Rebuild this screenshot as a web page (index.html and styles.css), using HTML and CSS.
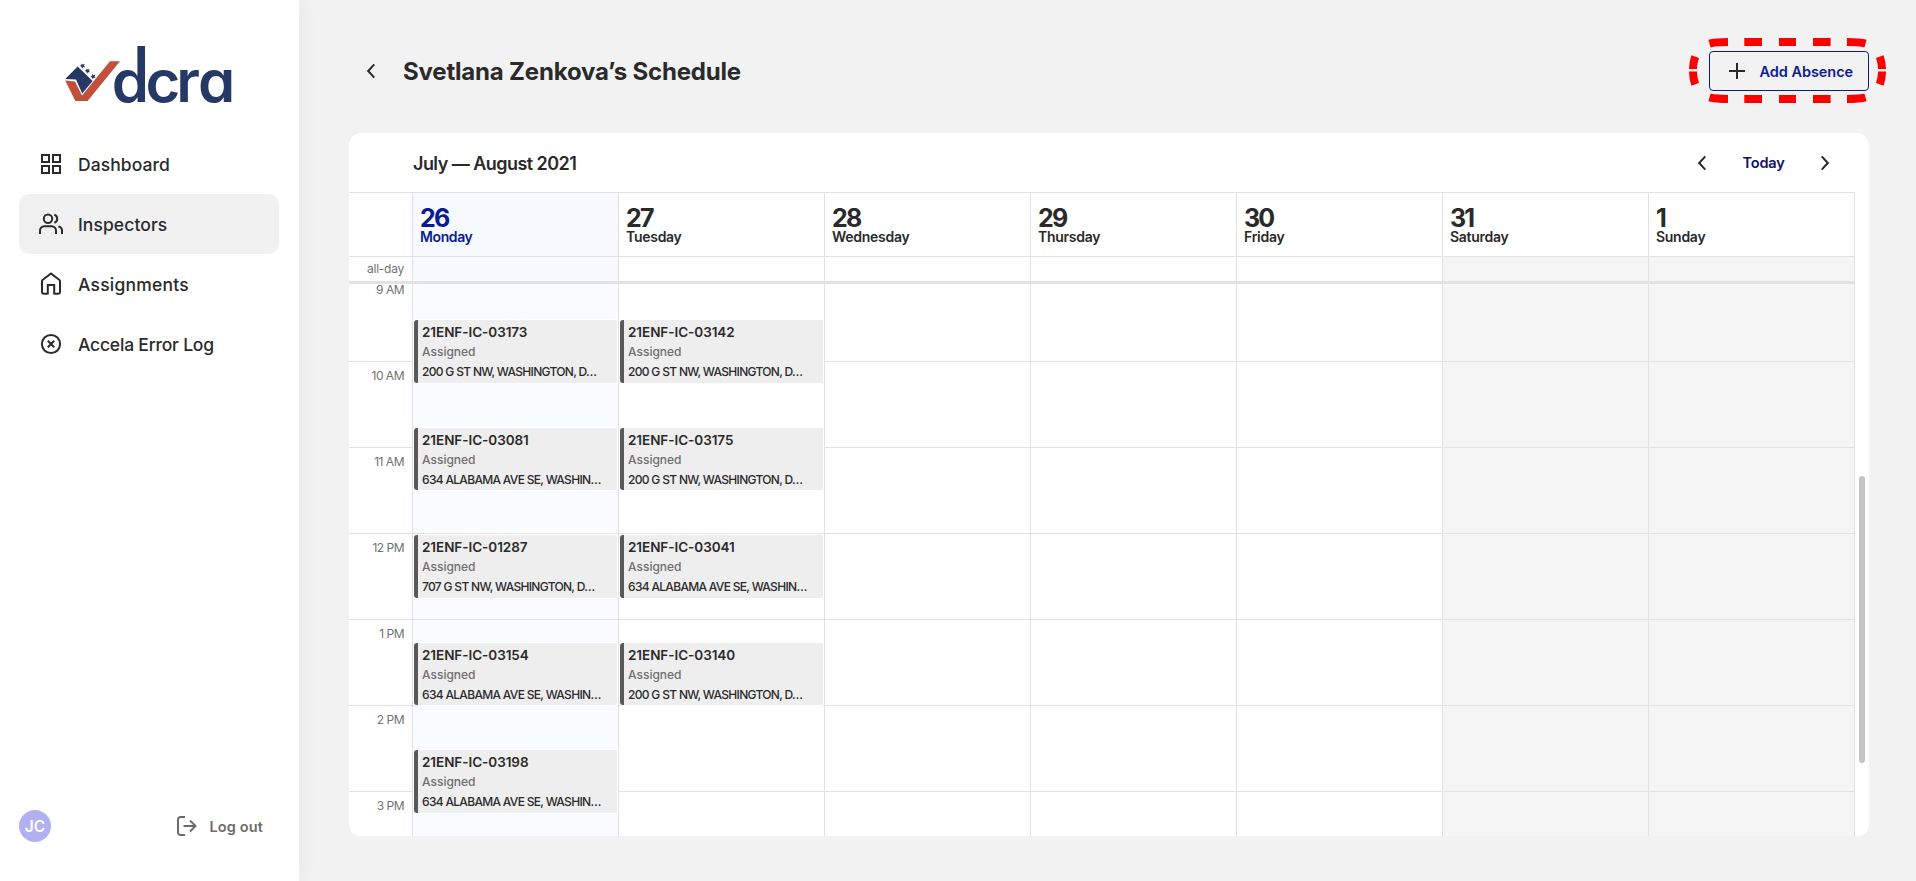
FILE: index.html
```html
<!DOCTYPE html>
<html lang="en">
<head>
<meta charset="utf-8">
<title>Svetlana Zenkova’s Schedule</title>
<link rel="stylesheet" href="styles.css">
</head>
<body>
<div class="app">
  <aside class="sidebar">
    <svg class="logo" width="170" height="60" viewBox="0 0 170 60" role="img" aria-label="dcra">
      <path fill="#c14f3c" d="M.2 34.4 10 35.6 17 49.6 45 15.2H55L22.6 55H10.4Z"/>
      <path fill="#263865" d="M.2 33 12.6 20.6 27.6 35 17.2 47.4 11 33.6Z"/>
      <g fill="#263865">
        <path id="star" d="M16.500 17.4l1.4 1.2 1.8-.5-.7 1.7 1 1.5-1.8-.1-1.2 1.4-.5-1.8-1.7-.7 1.6-1Z"/>
        <use href="#star" x="5" y="5"/>
        <use href="#star" x="10.6" y="10.6"/>
      </g>
      <path fill="#263865" d="M72.400 0H80V14H72.400Z"/>
      <text class="logo-text" x="45.300 78.100 108 129.200" y="56" transform="scale(1.03 1)">dcra</text>
    </svg>
    <nav class="nav">
      <a class="nav-item">
        <svg width="24" height="24" viewBox="0 0 24 24"><path d="M3 3h7v7H3zM14 3h7v7h-7zM3 14h7v7H3zM14 14h7v7h-7z"/></svg>
        <span>Dashboard</span>
      </a>
      <a class="nav-item active">
        <svg width="24" height="24" viewBox="0 0 24 24"><circle cx="9" cy="6.7" r="4.2"/><path d="M1 22v-3.5a4.3 4.3 0 0 1 4.3-4.3h7.4a4.3 4.3 0 0 1 4.3 4.3V22M15.3 2.7a4.2 4.2 0 0 1 0 8M19.4 14.4a4.3 4.3 0 0 1 3.6 4.2V22"/></svg>
        <span>Inspectors</span>
      </a>
      <a class="nav-item wide">
        <svg width="24" height="24" viewBox="0 0 24 24"><path d="M8.6 21.8H5a2 2 0 0 1-2-2V9.3a2 2 0 0 1 .8-1.6L12 1.4l8.2 6.3a2 2 0 0 1 .8 1.6v10.5a2 2 0 0 1-2 2h-3.6M8.8 22.5V13h6.4v9.5"/></svg>
        <span>Assignments</span>
      </a>
      <a class="nav-item log">
        <svg width="24" height="24" viewBox="0 0 24 24"><circle cx="12" cy="12" r="9.1"/><path d="M8.8 8.8l6.4 6.4M15.2 8.8l-6.4 6.4"/></svg>
        <span>Accela Error Log</span>
      </a>
    </nav>
    <div class="account">
      <span class="avatar">JC</span>
      <a class="logout">
        <svg width="20" height="20" viewBox="0 0 20 20"><path d="M8 1H3.5A2.5 2.5 0 0 0 1 3.500v13A2.500 2.500 0 0 0 3.500 19H8M6.500 10h12M13 4.500l5.500 5.500L13 15.500"/></svg>
        <span>Log out</span>
      </a>
    </div>
  </aside>

  <main class="main">
    <header class="page-head">
      <svg class="chev" width="8" height="16" viewBox="0 0 8 16"><path d="M7.300 1.300 1.200 8l6.100 6.700"/></svg>
      <h1>Svetlana Zenkova’s Schedule</h1>
      <div class="add-wrap">
        <button class="add">
          <svg width="16" height="16" viewBox="0 0 16 16"><path d="M8 0v16M0 8h16"/></svg>
          <span>Add Absence</span>
        </button>
        <svg class="callout" width="197" height="65" viewBox="0 0 197 65">
          <path d="M4 31Q4 25 6.200 18.600M20.500 5.600Q26 4 39 4M55.300 4H73M90 4h17M124 4h17.600M158 4Q171 4 176.500 5.600M190.800 18.600Q193 25 193 31M193 33.500Q193 40 190.800 46.400M176.500 59.400Q171 61 158 61M141.600 61H124M107 61H90M73 61H55.300M39 61Q26 61 20.500 59.400M6.200 46.400Q4 40 4 33.500"/>
        </svg>
      </div>
    </header>

    <section class="card">
      <div class="toolbar">
        <h2>July — August 2021</h2>
        <div class="pager">
          <svg class="chev" width="8" height="16" viewBox="0 0 8 16"><path d="M7.300 1.300 1.200 8l6.100 6.700"/></svg>
          <span>Today</span>
          <svg class="chev" width="8" height="16" viewBox="0 0 8 16"><path d="M.7 1.300 6.800 8 .7 14.700"/></svg>
        </div>
      </div>

      <div class="calendar">
        <div class="row days">
          <div></div>
          <div class="today"><b>26</b><span class="mon">Monday</span></div>
          <div><b>27</b><span>Tuesday</span></div>
          <div><b>28</b><span>Wednesday</span></div>
          <div><b>29</b><span>Thursday</span></div>
          <div><b>30</b><span>Friday</span></div>
          <div><b>31</b><span>Saturday</span></div>
          <div><b>1</b><span>Sunday</span></div>
        </div>
        <div class="row allday">
          <div class="label">all-day</div>
          <div class="today"></div><div></div><div></div><div></div><div></div>
          <div class="weekend"></div><div class="weekend"></div>
        </div>
        <div class="row grid">
          <div class="hours">
            <div class="label am">9 AM</div><div class="label">10 AM</div><div class="label">11 AM</div><div class="label">12 PM</div><div class="label">1 PM</div><div class="label">2 PM</div><div class="label">3 PM</div>
          </div>
          <div class="col today">
            <article class="event e1"><h3>21ENF-IC-03173</h3><p>Assigned</p><address>200 G ST NW, WASHINGTON, D…</address></article>
            <article class="event e2"><h3>21ENF-IC-03081</h3><p>Assigned</p><address>634 ALABAMA AVE SE, WASHIN…</address></article>
            <article class="event e3"><h3>21ENF-IC-01287</h3><p>Assigned</p><address>707 G ST NW, WASHINGTON, D…</address></article>
            <article class="event e4"><h3>21ENF-IC-03154</h3><p>Assigned</p><address>634 ALABAMA AVE SE, WASHIN…</address></article>
            <article class="event e5"><h3>21ENF-IC-03198</h3><p>Assigned</p><address>634 ALABAMA AVE SE, WASHIN…</address></article>
          </div>
          <div class="col">
            <article class="event e1"><h3>21ENF-IC-03142</h3><p>Assigned</p><address>200 G ST NW, WASHINGTON, D…</address></article>
            <article class="event e2"><h3>21ENF-IC-03175</h3><p>Assigned</p><address>200 G ST NW, WASHINGTON, D…</address></article>
            <article class="event e3"><h3>21ENF-IC-03041</h3><p>Assigned</p><address>634 ALABAMA AVE SE, WASHIN…</address></article>
            <article class="event e4"><h3>21ENF-IC-03140</h3><p>Assigned</p><address>200 G ST NW, WASHINGTON, D…</address></article>
          </div>
          <div class="col"></div><div class="col"></div><div class="col"></div>
          <div class="col weekend"></div><div class="col weekend"></div>
        </div>
      </div>
      <div class="scroll-thumb"></div>
    </section>
  </main>
</div>
</body>
</html>
```
FILE: styles.css
```css
* { box-sizing: border-box; }
body { margin: 0; font-family: Inter, "Liberation Sans", sans-serif; color: #2a2a2a; background: #f2f2f2; }
h1, h2, h3, p { margin: 0; }
svg { display: block; flex: none; fill: none; stroke: #2a2a2a; stroke-width: 2; }
.app { display: flex; height: 881px; overflow: hidden; }

.sidebar { width: 299px; flex: none; background: #fff; display: flex; flex-direction: column; padding: 46px 20px 39px 19px; box-shadow: 0 0 20px rgba(0, 0, 0, .05); }
.logo { margin-left: 46px; stroke: none; overflow: visible; }
.logo-text { font: 600 58px Inter, sans-serif; font-feature-settings: "cv11"; fill: #263865; }
.nav { margin-top: 28px; display: flex; flex-direction: column; }
.nav-item { height: 60px; border-radius: 10px; display: flex; align-items: center; gap: 15px; padding-left: 20px; font-size: 17.5px; font-weight: 450; letter-spacing: .08px; white-space: nowrap; }
.nav-item span { padding-top: 1px; }
.nav-item.active { background: #f1f1f1; }
.nav-item.wide { letter-spacing: .22px; }
.nav-item.log { letter-spacing: -.2px; }
.account { margin-top: auto; display: flex; align-items: center; justify-content: space-between; padding-right: 16px; }
.avatar { width: 32px; height: 32px; border-radius: 50%; background: #b1b1f1; color: #fff; font-size: 15.5px; font-weight: 600; display: grid; place-items: center; }
.logout { display: flex; align-items: center; gap: 12.5px; font-size: 14.5px; font-weight: 600; color: #6b6b6b; letter-spacing: .14px; }
.logout svg { stroke: #6b6b6b; }

.main { flex: 1; padding: 51px 47px 45px 50px; }
.page-head { display: flex; align-items: center; height: 40px; padding-left: 18px; }
h1 { margin-left: 28px; font-size: 24px; font-weight: 650; letter-spacing: -.19px; line-height: 40px; padding-top: 1px; }
.add-wrap { margin-left: auto; position: relative; }
.add { width: 160px; height: 40px; padding: 0 0 0 19px; border: 1px solid #0d1b90; border-radius: 4px; background: transparent; display: flex; align-items: center; gap: 14.5px; color: #0d1b90; font: 600 14.5px Inter, sans-serif; white-space: nowrap; }
.add span { letter-spacing: -.05px; }
.callout { position: absolute; left: -20px; top: -13px; stroke: #f00; stroke-width: 8; pointer-events: none; }

.card { position: relative; margin-top: 42px; height: 703px; border-radius: 12px; background: #fff; overflow: hidden; }
.toolbar { height: 59px; display: flex; align-items: center; justify-content: space-between; padding: 0 40px 0 64px; }
h2 { font-size: 18px; font-weight: 600; letter-spacing: -.54px; padding-top: 2px; }
.pager { display: flex; align-items: center; gap: 36.5px; font-size: 14.5px; font-weight: 600; color: #0b1068; }
.pager span { letter-spacing: -.2px; }

.calendar { width: 1506px; border-top: 1px solid #e2e2e2; }
.row { display: grid; grid-template-columns: 63px repeat(7, 206px); border-right: 1px solid #e2e2e2; }
.row > div + div { border-left: 1px solid #e2e2e2; }
.days { height: 63px; }
.days > div { padding: 14px 0 0 7px; display: flex; flex-direction: column; }
.days b { font-size: 25px; line-height: 23px; letter-spacing: -1.8px; font-weight: 650; }
.days span { font-size: 14px; font-weight: 600; line-height: 14px; letter-spacing: -.28px; }
.days .mon { letter-spacing: -.4px; }
.days .today { background: #f6f9fe; color: #0a1a93; }
.allday { height: 28px; border-top: 1px solid #e2e2e2; border-bottom: 3px solid #e2e2e2; }
.label { font-size: 12px; color: #717171; text-align: right; padding-right: 8px; letter-spacing: -.5px; }
.allday .label { line-height: 24px; letter-spacing: -.25px; }
.allday .today { background: #f6f9fe; }
.weekend { background-color: #f5f5f5; }
.grid { height: 552px; overflow: hidden; }
.hours .label { height: 86px; border-bottom: 1px solid #e2e2e2; padding-top: 6px; line-height: 15px; }
.hours .am { height: 78px; padding-top: 0; line-height: 12px; }
.col { position: relative; background-image: repeating-linear-gradient(transparent 0 85px, #e2e2e2 85px 86px); background-size: 100% 602px; background-position: 0 -8px; background-repeat: no-repeat; }
.col.today { background-color: #f8fbff; }

.event { position: absolute; left: 1px; width: 203px; height: 63px; padding: 5px 4px 0; background: #eee; border-left: 4px solid #595959; border-radius: 3px 1px 1px 3px; box-shadow: 0 0 0 1px #fff; white-space: nowrap; overflow: hidden; }
.event h3 { font-size: 13.5px; line-height: 15px; font-weight: 600; letter-spacing: -.05px; }
.event p { margin-top: 4px; font-size: 12px; line-height: 16px; letter-spacing: 0; color: #6f6f6f; font-weight: 450; }
.event address { margin-top: 4px; font-size: 12px; line-height: 16px; letter-spacing: -.68px; font-style: normal; font-weight: 450; }
.e1 { top: 36px; }
.e2 { top: 144px; height: 62px; }
.e3 { top: 251px; }
.e4 { top: 359px; height: 62px; }
.e5 { top: 466px; }

.scroll-thumb { position: absolute; right: 4px; top: 343px; width: 6px; height: 287px; border-radius: 3px; background: #c5c5c5; }
```
